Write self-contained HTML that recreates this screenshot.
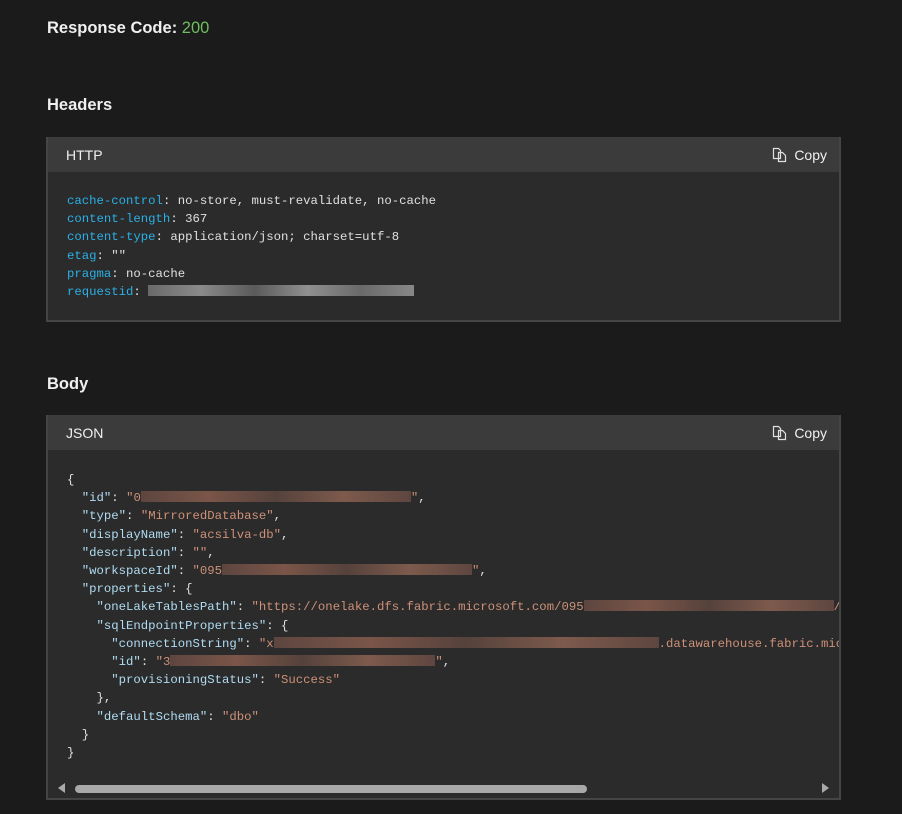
<!DOCTYPE html>
<html><head><style>
body{margin:0;background:#1b1b1b;width:902px;height:814px;overflow:hidden;font-family:"Liberation Sans",sans-serif;color:#f0f0f0}
h{position:absolute;left:47px;font-weight:bold;font-size:16.5px;display:block}
.box{position:absolute;left:46px;width:791px;border:2px solid #454545;border-top:0;background:#2b2b2b}
.hd{height:35px;background:#3b3b3b;font-size:14px;line-height:36px;padding-left:18px;position:relative}
.cp{position:absolute;right:12px;top:0;font-size:14px}
.cp svg{vertical-align:-3px;margin-right:7px}
pre{margin:0;font-family:"Liberation Mono",monospace;font-size:12.3px;line-height:18.2px;color:#e0e0e0;white-space:pre;overflow:hidden}
.k{color:#2bb0e6}.s{color:#ce9178}.j{color:#b0dcf2}
.b{display:inline-block;height:11px;vertical-align:-1px;background:linear-gradient(90deg,#6a6a6a,#8a8a8a 20%,#5a5a5a 40%,#909090 60%,#6a6a6a 80%,#888)}
.r{display:inline-block;height:11px;vertical-align:-1px;background:linear-gradient(90deg,#5d4640,#7a5548 25%,#55423c 50%,#7d5a4c 75%,#5e4640)}
</style></head><body>
<h style="top:19px">Response Code: <span style="color:#6dbf5e;font-weight:normal">200</span></h>
<h style="top:96px">Headers</h>
<div class="box" style="top:137px;height:183px">
<div class="hd">HTTP<span class="cp"><svg width="15" height="16" viewBox="0 0 15 16" fill="none" stroke="#e0e0e0" stroke-width="1.2"><path d="M1.5 1.5h5l2 2v8h-7z"/><path d="M6.5 5.5h4l3 3v6h-7z"/></svg>Copy</span></div>
<pre style="padding:20px 0 0 19px"><span class="k">cache-control</span>: no-store, must-revalidate, no-cache
<span class="k">content-length</span>: 367
<span class="k">content-type</span>: application/json; charset=utf-8
<span class="k">etag</span>: ""
<span class="k">pragma</span>: no-cache
<span class="k">requestid</span>: <span class="b" style="width:266px"></span></pre>
</div>
<h style="top:375px">Body</h>
<div class="box" style="top:415px;height:383px">
<div class="hd">JSON<span class="cp"><svg width="15" height="16" viewBox="0 0 15 16" fill="none" stroke="#e0e0e0" stroke-width="1.2"><path d="M1.5 1.5h5l2 2v8h-7z"/><path d="M6.5 5.5h4l3 3v6h-7z"/></svg>Copy</span></div>
<pre style="padding:21px 0 0 19px;width:772px;height:300px">{
  <span class="j">"id"</span>: <span class="s">"0<span class="r" style="width:270px"></span>"</span>,
  <span class="j">"type"</span>: <span class="s">"MirroredDatabase"</span>,
  <span class="j">"displayName"</span>: <span class="s">"acsilva-db"</span>,
  <span class="j">"description"</span>: <span class="s">""</span>,
  <span class="j">"workspaceId"</span>: <span class="s">"095<span class="r" style="width:250px"></span>"</span>,
  <span class="j">"properties"</span>: {
    <span class="j">"oneLakeTablesPath"</span>: <span class="s">"https://onelake.dfs.fabric.microsoft.com/095<span class="r" style="width:250px"></span>/d</span>
    <span class="j">"sqlEndpointProperties"</span>: {
      <span class="j">"connectionString"</span>: <span class="s">"x<span class="r" style="width:385px"></span>.datawarehouse.fabric.mic</span>
      <span class="j">"id"</span>: <span class="s">"3<span class="r" style="width:265px"></span>"</span>,
      <span class="j">"provisioningStatus"</span>: <span class="s">"Success"</span>
    },
    <span class="j">"defaultSchema"</span>: <span class="s">"dbo"</span>
  }
}</pre>
<div style="position:absolute;left:10px;top:368px;width:0;height:0;border:5px solid transparent;border-right:7px solid #aaa;border-left:0"></div>
<div style="position:absolute;left:27px;top:370px;width:512px;height:8px;border-radius:4px;background:#a8a8a8"></div>
<div style="position:absolute;left:774px;top:368px;width:0;height:0;border:5px solid transparent;border-left:7px solid #aaa;border-right:0"></div>
</div>
</body></html>
